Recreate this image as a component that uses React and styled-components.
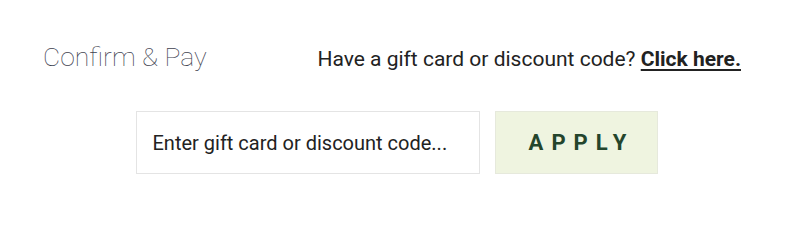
import React from 'react';
import styled, { createGlobalStyle } from 'styled-components';

const GlobalStyle = createGlobalStyle`
  body {
    margin: 0;
    background: #fff;
    font-family: Roboto, "Liberation Sans", sans-serif;
  }
`;

const Wrapper = styled.div`
  width: 788px;
  height: 217px;
  box-sizing: border-box;
  padding: 39.5px 47px 0 43px;
`;

const Header = styled.div`
  display: flex;
  justify-content: space-between;
  align-items: baseline;
`;

const Title = styled.h2`
  margin: 0;
  font-size: 26.5px;
  font-weight: 100;
  color: #3e4250;
  line-height: 34px;
`;

const Prompt = styled.p`
  margin: 0;
  font-size: 21px;
  color: #222;
  line-height: 32px;

  a {
    color: #222;
    font-weight: 700;
    text-decoration: underline;
    text-underline-offset: 3px;
    text-decoration-thickness: 2px;
  }
`;

const CodeRow = styled.form`
  display: flex;
  justify-content: center;
  gap: 15px;
  margin-top: 36.5px;
  margin-left: 9px;
`;

const CodeInput = styled.input`
  width: 344px;
  height: 63px;
  box-sizing: border-box;
  border: 1px solid #e4e4e4;
  padding: 0 16px;
  font-family: Roboto, "Liberation Sans", sans-serif;
  font-size: 20px;
  color: #222;
  outline: none;

  &::placeholder {
    color: #222;
    opacity: 1;
  }
`;

const ApplyButton = styled.button`
  width: 163px;
  height: 63px;
  box-sizing: border-box;
  border: 1px solid #e6e9dc;
  background: #eff4e0;
  color: #24452c;
  font-family: Roboto, "Liberation Sans", sans-serif;
  font-size: 22px;
  font-weight: 700;
  letter-spacing: 8px;
  padding: 0 0 0 11px;
  cursor: pointer;
`;

export default function App() {
  return (
    <>
      <GlobalStyle />
      <Wrapper>
        <Header>
          <Title>Confirm &amp; Pay</Title>
          <Prompt>
            Have a gift card or discount code? <a href="#">Click here.</a>
          </Prompt>
        </Header>
        <CodeRow onSubmit={(e) => e.preventDefault()}>
          <CodeInput placeholder="Enter gift card or discount code..." />
          <ApplyButton type="submit">APPLY</ApplyButton>
        </CodeRow>
      </Wrapper>
    </>
  );
}
